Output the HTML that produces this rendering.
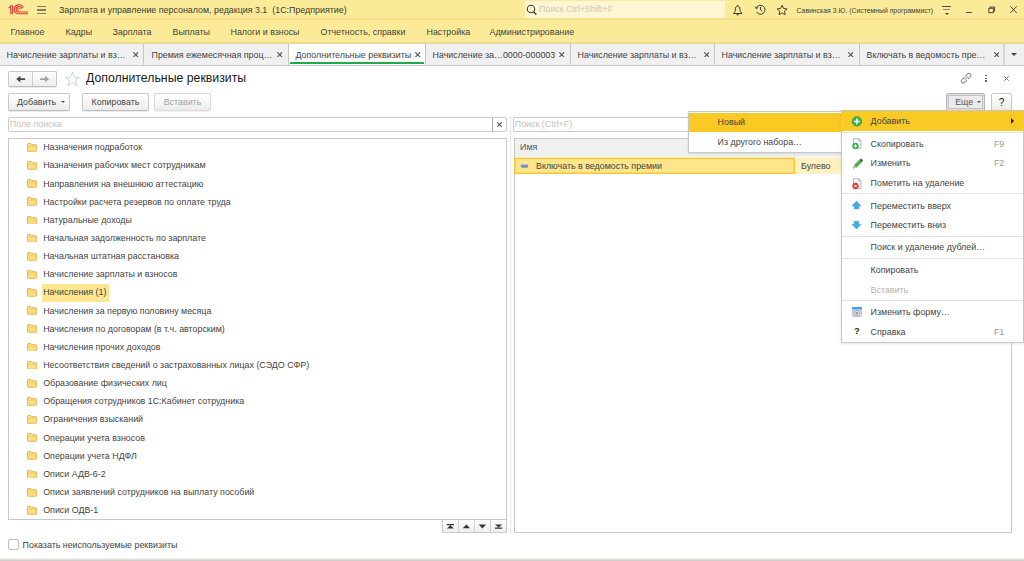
<!DOCTYPE html>
<html lang="ru">
<head>
<meta charset="utf-8">
<title>Дополнительные реквизиты</title>
<style>
*{box-sizing:border-box;margin:0;padding:0}
html,body{width:1024px;height:561px;overflow:hidden;background:#fff}
body{font-family:"Liberation Sans",sans-serif;font-size:8.89px;color:#444;position:relative}
.abs{position:absolute}
.t{position:absolute;white-space:nowrap;line-height:12px}
/* top bars */
#titlebar{left:0;top:0;width:1024px;height:44px;background:#fbeb99}
#sections{left:0;top:18px;width:1024px;height:3px;background:linear-gradient(#f6e390 33.3%,#f3de88 33.3%,#f3de88 66.6%,#f9e895 66.6%)}
#tabs{left:0;top:42px;width:1024px;height:24px;background:#f0f0f0;border-top:1px solid #f0dd88;border-bottom:1px solid #c9c9c9;box-shadow:inset 0 1px 0 #e4daa8}
.tabsep{position:absolute;top:44px;width:1px;height:21px;background:#c6c6c6}
.tabx{position:absolute;top:50px;width:7px;height:7px}
#activetab{left:289px;top:44px;width:136.6px;height:21.4px;background:#fff}
/* buttons */
.btn{position:absolute;height:18px;border:1px solid #c8c8c8;border-bottom-color:#bdbdbd;border-radius:2px;background:linear-gradient(#ffffff,#ececec);box-shadow:0 1px 0 rgba(0,0,0,.08);text-align:center;line-height:16px;white-space:nowrap;color:#444}
.btn.dis{color:#a2a2a2;border-color:#d9d9d9;box-shadow:0 1px 0 rgba(0,0,0,.05)}
.inp{position:absolute;height:15.4px;border:1px solid #cbcbcb;border-radius:2px;background:#fff;color:#c2c2c2;line-height:13.6px;padding-left:0.8px}
.panel{position:absolute;border:1px solid #c9c9c9;background:#fff}
.row{position:absolute;left:43.2px;white-space:nowrap;line-height:12px;color:#444}
.fold{position:absolute;left:26.7px;width:9.9px;height:8.8px}
/* menus */
.menu{position:absolute;background:#fff;border:1px solid #c8c8c8;box-shadow:0 1px 3px rgba(0,0,0,.10)}
.mi{position:absolute;left:28.6px;white-space:nowrap;line-height:12px;color:#444}
.mk{position:absolute;right:18.7px;white-space:nowrap;line-height:12px;color:#9a9a9a}
.msep{position:absolute;left:0;right:0;height:1px;background:#e3e3e3}
</style>
</head>
<body>
<!-- TITLE BAR -->
<div id="titlebar" class="abs"></div>
<div id="sections" class="abs"></div>
<div id="tabs" class="abs"></div>
<div id="activetab" class="abs"></div>
<div class="abs" style="left:290.2px;top:62.4px;width:133.6px;height:1.8px;background:#1faa4c"></div>

<div class="t" style="left:59px;top:4px;color:#3b3b2f">Зарплата и управление персоналом, редакция 3.1&nbsp; (1С:Предприятие)</div>


<!-- logo -->
<svg class="abs" style="left:8px;top:4.4px" width="21" height="12" viewBox="8 4 21 12" fill="none" stroke="#e0382d" stroke-width="1.1">
<path d="M8.6 8.1L10.8 5.9V14.3"/><path d="M12.6 5.2V14.3"/>
<path d="M23.2 8.2A4.45 4.45 0 1 0 18.9 13.75H28"/>
<path d="M21.5 8.8A2.7 2.7 0 1 0 18.9 11.95H28"/>
<path d="M19.9 9.3A1.1 1.1 0 1 0 18.9 10.3" stroke-width="0.9"/>
</svg>
<!-- hamburger -->
<div class="abs" style="left:37px;top:5.7px;width:9.2px;height:1.3px;background:#847e60"></div>
<div class="abs" style="left:37px;top:9.3px;width:9.2px;height:1.3px;background:#847e60"></div>
<div class="abs" style="left:37px;top:12.9px;width:9.2px;height:1.3px;background:#847e60"></div>
<!-- global search -->
<div class="abs" style="left:525px;top:1px;width:200px;height:17px;background:#fdf5d3"></div>
<svg class="abs" style="left:526px;top:4px" width="12" height="12" viewBox="0 0 12 12" fill="none" stroke="#3c3c34" stroke-width="1.1"><circle cx="5" cy="5" r="3.7"/><path d="M7.7 7.9l2.6 2.7" stroke-width="1.4"/></svg>
<div class="t" style="left:539px;top:3px;color:#ccc9b6;letter-spacing:-0.02px">Поиск Ctrl+Shift+F</div>
<!-- bell -->
<svg class="abs" style="left:732px;top:4px" width="12" height="12" viewBox="0 0 12 12" fill="none" stroke="#3c3c34" stroke-width="1" stroke-linejoin="round"><path d="M5.7 1V2.1"/><path d="M5.7 2.1C4 2.1 3.4 3.5 3.4 5.2C3.4 7.4 2.8 8.4 1.3 9.5H10.1C8.6 8.4 8 7.4 8 5.2C8 3.5 7.4 2.1 5.7 2.1Z"/><path d="M4.7 10.8h2" stroke-width="1.2"/></svg>
<!-- history -->
<svg class="abs" style="left:754px;top:4px" width="13" height="12" viewBox="754 4 13 12" fill="none" stroke="#3c3c34" stroke-width="1"><path d="M756.3 8.2A4.5 4.5 0 1 1 756.5 11.8"/><path d="M755.3 6.5l.9 2 2-.8" stroke-width="0.9"/><path d="M760.6 6.9V10l1.7 1.5"/></svg>
<!-- fav star -->
<svg class="abs" style="left:776.2px;top:3.8px" width="12.2" height="12.2" viewBox="0 0 13 13" fill="none" stroke="#3c3c34" stroke-width="1.05" stroke-linejoin="round"><path d="M6.5 1.3l1.6 3.5 3.7.4-2.8 2.5.8 3.7-3.3-1.9-3.3 1.9.8-3.7L1.2 5.2l3.7-.4z"/></svg>
<div class="t" style="left:796.6px;top:4.5px;font-size:6.84px;color:#3e3e34">Савинская З.Ю. (Системный программист)</div>
<!-- settings -->
<div class="abs" style="left:942px;top:5.7px;width:9.4px;height:1.1px;background:#4a4a40"></div>
<div class="abs" style="left:943.3px;top:8.6px;width:7px;height:1.1px;background:#8e8a6a"></div>
<div class="abs" style="left:944.7px;top:12.9px;width:0;height:0;border-top:2.3px solid #3a3a32;border-left:2px solid transparent;border-right:2px solid transparent"></div>
<!-- window controls -->
<div class="abs" style="left:966.3px;top:11.7px;width:5.9px;height:1px;background:#55553f"></div>
<svg class="abs" style="left:987px;top:5px" width="9" height="9" viewBox="0 0 9 9" fill="none" stroke="#4a4a3c" stroke-width="1"><rect x="1.9" y="3.3" width="4.4" height="4.4"/><path d="M3.1 3.3V2H7.6V6.3H6.3"/></svg>
<svg class="abs" style="left:1009.3px;top:4.9px" width="10" height="10" viewBox="0 0 10 10" fill="none" stroke="#4a4a3c" stroke-width="1"><path d="M1.3 1.3l6.5 6.7M7.8 1.3L1.3 8"/></svg>

<!-- sections -->
<div class="t" style="left:10.5px;top:26px">Главное</div>
<div class="t" style="left:65.5px;top:26px">Кадры</div>
<div class="t" style="left:112.5px;top:26px">Зарплата</div>
<div class="t" style="left:172.5px;top:26px">Выплаты</div>
<div class="t" style="left:230.5px;top:26px">Налоги и взносы</div>
<div class="t" style="left:320.5px;top:26px">Отчетность, справки</div>
<div class="t" style="left:426.5px;top:26px">Настройка</div>
<div class="t" style="left:489.5px;top:26px">Администрирование</div>

<!-- tabs -->
<div class="t" style="left:6.5px;top:49px">Начисление зарплаты и вз…</div>
<div class="tabsep" style="left:143px"></div>
<div class="t" style="left:151.5px;top:49px">Премия ежемесячная проц…</div>
<div class="tabsep" style="left:288px"></div>
<div class="t" style="left:295.5px;top:49px">Дополнительные реквизиты</div>
<div class="tabsep" style="left:425px"></div>
<div class="t" style="left:432.5px;top:49px">Начисление за…0000-000003</div>
<div class="tabsep" style="left:570px"></div>
<div class="t" style="left:577.5px;top:49px">Начисление зарплаты и вз…</div>
<div class="tabsep" style="left:714px"></div>
<div class="t" style="left:721.5px;top:49px">Начисление зарплаты и вз…</div>
<div class="tabsep" style="left:859px"></div>
<div class="t" style="left:866.5px;top:49px">Включать в ведомость пре…</div>
<div class="tabsep" style="left:1003px;width:2px;background:#d6d6d6"></div>

<svg class="abs" style="left:133.4px;top:51.9px" width="5.4" height="5.4" viewBox="0 0 5.4 5.4" stroke="#4c4c4c" stroke-width="1.05"><path d="M.3 .3L5.1 5.1M5.1 .3L.3 5.1"/></svg>
<svg class="abs" style="left:277.3px;top:51.9px" width="5.4" height="5.4" viewBox="0 0 5.4 5.4" stroke="#4c4c4c" stroke-width="1.05"><path d="M.3 .3L5.1 5.1M5.1 .3L.3 5.1"/></svg>
<svg class="abs" style="left:415.4px;top:51.9px" width="5.4" height="5.4" viewBox="0 0 5.4 5.4" stroke="#4c4c4c" stroke-width="1.05"><path d="M.3 .3L5.1 5.1M5.1 .3L.3 5.1"/></svg>
<svg class="abs" style="left:559.4px;top:51.9px" width="5.4" height="5.4" viewBox="0 0 5.4 5.4" stroke="#4c4c4c" stroke-width="1.05"><path d="M.3 .3L5.1 5.1M5.1 .3L.3 5.1"/></svg>
<svg class="abs" style="left:704.0px;top:51.9px" width="5.4" height="5.4" viewBox="0 0 5.4 5.4" stroke="#4c4c4c" stroke-width="1.05"><path d="M.3 .3L5.1 5.1M5.1 .3L.3 5.1"/></svg>
<svg class="abs" style="left:848.3px;top:51.9px" width="5.4" height="5.4" viewBox="0 0 5.4 5.4" stroke="#4c4c4c" stroke-width="1.05"><path d="M.3 .3L5.1 5.1M5.1 .3L.3 5.1"/></svg>
<svg class="abs" style="left:993.7px;top:51.9px" width="5.4" height="5.4" viewBox="0 0 5.4 5.4" stroke="#4c4c4c" stroke-width="1.05"><path d="M.3 .3L5.1 5.1M5.1 .3L.3 5.1"/></svg>
<div class="abs" style="left:1011.3px;top:53px;width:0;height:0;border-top:3.4px solid #444;border-left:3px solid transparent;border-right:3px solid transparent"></div>
<!-- FORM HEADER -->
<div class="btn" style="left:8px;top:71px;width:49px;height:16px"></div>
<div class="abs" style="left:32px;top:72px;width:1px;height:14px;background:#d0d0d0"></div>

<svg class="abs" style="left:8px;top:71px" width="49" height="16" viewBox="8 71 49 16">
<path d="M16.2 79.1l4.2-3.4v2.5h4.7v1.8h-4.7v2.5z" fill="#484848"/>
<path d="M49.2 79.1l-4.2-3.4v2.5h-4.9v1.8h4.9v2.5z" fill="#a4a4a4"/>
</svg>
<svg class="abs" style="left:64px;top:71px" width="17" height="16" viewBox="64 71 17 16" fill="#fff" stroke="#bfc7d1" stroke-width="0.8" stroke-linejoin="miter"><path d="M72.4 72.3l1.9 4.8 5.1.3-4 3.2 1.3 5-4.3-2.8-4.3 2.8 1.3-5-4-3.2 5.1-.3z"/></svg>
<!-- link, dots, close -->
<svg class="abs" style="left:960px;top:72px" width="13" height="13" viewBox="960 72 13 13" fill="none" stroke="#8c8c8c" stroke-width="1"><g transform="rotate(-45 966.1 78.2)"><path d="M965.3 76.3h-3.3a1.9 1.9 0 0 0 0 3.8h3.3"/><path d="M966.9 76.3h3.3a1.9 1.9 0 0 1 0 3.8h-3.3"/><path d="M964 78.2h4.2"/></g></svg>
<div class="abs" style="left:985.2px;top:74.7px;width:1.4px;height:1.4px;background:#666"></div>
<div class="abs" style="left:985.2px;top:77.5px;width:1.4px;height:1.4px;background:#666"></div>
<div class="abs" style="left:985.2px;top:80.3px;width:1.4px;height:1.4px;background:#666"></div>
<svg class="abs" style="left:1003.8px;top:76.1px" width="5" height="5" viewBox="0 0 5 5" stroke="#777" stroke-width="1"><path d="M.3 .3L4.7 4.7M4.7 .3L.3 4.7"/></svg>
<div class="t" style="left:86px;top:70px;font-size:12.3px;line-height:16px;color:#1a1a1a">Дополнительные реквизиты</div>

<div class="btn" style="left:8px;top:93px;width:62px;text-align:left;padding-left:8px">Добавить</div>
<div class="abs" style="left:60.5px;top:100.9px;width:0;height:0;border-top:2.4px solid #555;border-left:2.1px solid transparent;border-right:2.1px solid transparent"></div>
<div class="btn" style="left:82px;top:93px;width:67px">Копировать</div>
<div class="btn dis" style="left:154px;top:93px;width:57px">Вставить</div>
<div class="btn" style="left:945.5px;top:93px;width:39.8px;background:#ebebeb;border-color:#b4b4b4;color:#555;box-shadow:inset 0 0 0 1px #e2e2e2,inset 0 0 0 2px #c2c2c2;text-align:left;padding-left:8.7px">Еще</div>
<div class="abs" style="left:977.4px;top:100.9px;width:0;height:0;border-top:2.4px solid #555;border-left:2px solid transparent;border-right:2px solid transparent"></div>
<div class="btn" style="left:991.3px;top:93px;width:20.6px;color:#222;font-size:10px;line-height:17px">?</div>

<div class="inp" style="left:8px;top:116.8px;width:499px">Поле поиска</div>
<div class="abs" style="left:492px;top:117.5px;width:1px;height:14px;background:#adadad"></div>
<svg class="abs" style="left:496.9px;top:122px" width="5" height="5" viewBox="0 0 5 5" stroke="#555" stroke-width="1.05"><path d="M.3 .3L4.7 4.7M4.7 .3L.3 4.7"/></svg>
<div class="inp" style="left:513px;top:116.8px;width:499px">Поиск (Ctrl+F)</div>

<!-- LEFT TREE -->
<div class="panel" id="tree" style="left:8px;top:138px;width:499px;height:382px"></div>
<svg class="fold" style="top:142.90px" viewBox="0 0 10.4 8.8" preserveAspectRatio="none"><path d="M.5 1.1Q.5 .5 1.1 .5H4L5 1.7H9.3Q9.9 1.7 9.9 2.3V7.7Q9.9 8.3 9.3 8.3H1.1Q.5 8.3 .5 7.7Z" fill="#fbdd84" stroke="#e4ae42" stroke-width=".9"/><path d="M1 3.3H9.4" stroke="#f0c55e" stroke-width=".7"/></svg>
<div class="row" style="top:141.20px">Назначения подработок</div>
<svg class="fold" style="top:161.05px" viewBox="0 0 10.4 8.8" preserveAspectRatio="none"><path d="M.5 1.1Q.5 .5 1.1 .5H4L5 1.7H9.3Q9.9 1.7 9.9 2.3V7.7Q9.9 8.3 9.3 8.3H1.1Q.5 8.3 .5 7.7Z" fill="#fbdd84" stroke="#e4ae42" stroke-width=".9"/><path d="M1 3.3H9.4" stroke="#f0c55e" stroke-width=".7"/></svg>
<div class="row" style="top:159.35px">Назначения рабочих мест сотрудникам</div>
<svg class="fold" style="top:179.20px" viewBox="0 0 10.4 8.8" preserveAspectRatio="none"><path d="M.5 1.1Q.5 .5 1.1 .5H4L5 1.7H9.3Q9.9 1.7 9.9 2.3V7.7Q9.9 8.3 9.3 8.3H1.1Q.5 8.3 .5 7.7Z" fill="#fbdd84" stroke="#e4ae42" stroke-width=".9"/><path d="M1 3.3H9.4" stroke="#f0c55e" stroke-width=".7"/></svg>
<div class="row" style="top:177.50px">Направления на внешнюю аттестацию</div>
<svg class="fold" style="top:197.35px" viewBox="0 0 10.4 8.8" preserveAspectRatio="none"><path d="M.5 1.1Q.5 .5 1.1 .5H4L5 1.7H9.3Q9.9 1.7 9.9 2.3V7.7Q9.9 8.3 9.3 8.3H1.1Q.5 8.3 .5 7.7Z" fill="#fbdd84" stroke="#e4ae42" stroke-width=".9"/><path d="M1 3.3H9.4" stroke="#f0c55e" stroke-width=".7"/></svg>
<div class="row" style="top:195.65px">Настройки расчета резервов по оплате труда</div>
<svg class="fold" style="top:215.50px" viewBox="0 0 10.4 8.8" preserveAspectRatio="none"><path d="M.5 1.1Q.5 .5 1.1 .5H4L5 1.7H9.3Q9.9 1.7 9.9 2.3V7.7Q9.9 8.3 9.3 8.3H1.1Q.5 8.3 .5 7.7Z" fill="#fbdd84" stroke="#e4ae42" stroke-width=".9"/><path d="M1 3.3H9.4" stroke="#f0c55e" stroke-width=".7"/></svg>
<div class="row" style="top:213.80px">Натуральные доходы</div>
<svg class="fold" style="top:233.65px" viewBox="0 0 10.4 8.8" preserveAspectRatio="none"><path d="M.5 1.1Q.5 .5 1.1 .5H4L5 1.7H9.3Q9.9 1.7 9.9 2.3V7.7Q9.9 8.3 9.3 8.3H1.1Q.5 8.3 .5 7.7Z" fill="#fbdd84" stroke="#e4ae42" stroke-width=".9"/><path d="M1 3.3H9.4" stroke="#f0c55e" stroke-width=".7"/></svg>
<div class="row" style="top:231.95px">Начальная задолженность по зарплате</div>
<svg class="fold" style="top:251.80px" viewBox="0 0 10.4 8.8" preserveAspectRatio="none"><path d="M.5 1.1Q.5 .5 1.1 .5H4L5 1.7H9.3Q9.9 1.7 9.9 2.3V7.7Q9.9 8.3 9.3 8.3H1.1Q.5 8.3 .5 7.7Z" fill="#fbdd84" stroke="#e4ae42" stroke-width=".9"/><path d="M1 3.3H9.4" stroke="#f0c55e" stroke-width=".7"/></svg>
<div class="row" style="top:250.10px">Начальная штатная расстановка</div>
<svg class="fold" style="top:269.95px" viewBox="0 0 10.4 8.8" preserveAspectRatio="none"><path d="M.5 1.1Q.5 .5 1.1 .5H4L5 1.7H9.3Q9.9 1.7 9.9 2.3V7.7Q9.9 8.3 9.3 8.3H1.1Q.5 8.3 .5 7.7Z" fill="#fbdd84" stroke="#e4ae42" stroke-width=".9"/><path d="M1 3.3H9.4" stroke="#f0c55e" stroke-width=".7"/></svg>
<div class="row" style="top:268.25px">Начисление зарплаты и взносов</div>
<div class="abs" style="left:42px;top:283.80px;width:66.5px;height:17.9px;background:#fde68f"></div>
<svg class="fold" style="top:288.10px" viewBox="0 0 10.4 8.8" preserveAspectRatio="none"><path d="M.5 1.1Q.5 .5 1.1 .5H4L5 1.7H9.3Q9.9 1.7 9.9 2.3V7.7Q9.9 8.3 9.3 8.3H1.1Q.5 8.3 .5 7.7Z" fill="#fbdd84" stroke="#e4ae42" stroke-width=".9"/><path d="M1 3.3H9.4" stroke="#f0c55e" stroke-width=".7"/></svg>
<div class="row" style="top:286.40px">Начисления (1)</div>
<svg class="fold" style="top:306.25px" viewBox="0 0 10.4 8.8" preserveAspectRatio="none"><path d="M.5 1.1Q.5 .5 1.1 .5H4L5 1.7H9.3Q9.9 1.7 9.9 2.3V7.7Q9.9 8.3 9.3 8.3H1.1Q.5 8.3 .5 7.7Z" fill="#fbdd84" stroke="#e4ae42" stroke-width=".9"/><path d="M1 3.3H9.4" stroke="#f0c55e" stroke-width=".7"/></svg>
<div class="row" style="top:304.55px">Начисления за первую половину месяца</div>
<svg class="fold" style="top:324.40px" viewBox="0 0 10.4 8.8" preserveAspectRatio="none"><path d="M.5 1.1Q.5 .5 1.1 .5H4L5 1.7H9.3Q9.9 1.7 9.9 2.3V7.7Q9.9 8.3 9.3 8.3H1.1Q.5 8.3 .5 7.7Z" fill="#fbdd84" stroke="#e4ae42" stroke-width=".9"/><path d="M1 3.3H9.4" stroke="#f0c55e" stroke-width=".7"/></svg>
<div class="row" style="top:322.70px">Начисления по договорам (в т.ч. авторским)</div>
<svg class="fold" style="top:342.55px" viewBox="0 0 10.4 8.8" preserveAspectRatio="none"><path d="M.5 1.1Q.5 .5 1.1 .5H4L5 1.7H9.3Q9.9 1.7 9.9 2.3V7.7Q9.9 8.3 9.3 8.3H1.1Q.5 8.3 .5 7.7Z" fill="#fbdd84" stroke="#e4ae42" stroke-width=".9"/><path d="M1 3.3H9.4" stroke="#f0c55e" stroke-width=".7"/></svg>
<div class="row" style="top:340.85px">Начисления прочих доходов</div>
<svg class="fold" style="top:360.70px" viewBox="0 0 10.4 8.8" preserveAspectRatio="none"><path d="M.5 1.1Q.5 .5 1.1 .5H4L5 1.7H9.3Q9.9 1.7 9.9 2.3V7.7Q9.9 8.3 9.3 8.3H1.1Q.5 8.3 .5 7.7Z" fill="#fbdd84" stroke="#e4ae42" stroke-width=".9"/><path d="M1 3.3H9.4" stroke="#f0c55e" stroke-width=".7"/></svg>
<div class="row" style="top:359.00px">Несоответствия сведений о застрахованных лицах (СЭДО СФР)</div>
<svg class="fold" style="top:378.85px" viewBox="0 0 10.4 8.8" preserveAspectRatio="none"><path d="M.5 1.1Q.5 .5 1.1 .5H4L5 1.7H9.3Q9.9 1.7 9.9 2.3V7.7Q9.9 8.3 9.3 8.3H1.1Q.5 8.3 .5 7.7Z" fill="#fbdd84" stroke="#e4ae42" stroke-width=".9"/><path d="M1 3.3H9.4" stroke="#f0c55e" stroke-width=".7"/></svg>
<div class="row" style="top:377.15px">Образование физических лиц</div>
<svg class="fold" style="top:397.00px" viewBox="0 0 10.4 8.8" preserveAspectRatio="none"><path d="M.5 1.1Q.5 .5 1.1 .5H4L5 1.7H9.3Q9.9 1.7 9.9 2.3V7.7Q9.9 8.3 9.3 8.3H1.1Q.5 8.3 .5 7.7Z" fill="#fbdd84" stroke="#e4ae42" stroke-width=".9"/><path d="M1 3.3H9.4" stroke="#f0c55e" stroke-width=".7"/></svg>
<div class="row" style="top:395.30px">Обращения сотрудников 1С:Кабинет сотрудника</div>
<svg class="fold" style="top:415.15px" viewBox="0 0 10.4 8.8" preserveAspectRatio="none"><path d="M.5 1.1Q.5 .5 1.1 .5H4L5 1.7H9.3Q9.9 1.7 9.9 2.3V7.7Q9.9 8.3 9.3 8.3H1.1Q.5 8.3 .5 7.7Z" fill="#fbdd84" stroke="#e4ae42" stroke-width=".9"/><path d="M1 3.3H9.4" stroke="#f0c55e" stroke-width=".7"/></svg>
<div class="row" style="top:413.45px">Ограничения взысканий</div>
<svg class="fold" style="top:433.30px" viewBox="0 0 10.4 8.8" preserveAspectRatio="none"><path d="M.5 1.1Q.5 .5 1.1 .5H4L5 1.7H9.3Q9.9 1.7 9.9 2.3V7.7Q9.9 8.3 9.3 8.3H1.1Q.5 8.3 .5 7.7Z" fill="#fbdd84" stroke="#e4ae42" stroke-width=".9"/><path d="M1 3.3H9.4" stroke="#f0c55e" stroke-width=".7"/></svg>
<div class="row" style="top:431.60px">Операции учета взносов</div>
<svg class="fold" style="top:451.45px" viewBox="0 0 10.4 8.8" preserveAspectRatio="none"><path d="M.5 1.1Q.5 .5 1.1 .5H4L5 1.7H9.3Q9.9 1.7 9.9 2.3V7.7Q9.9 8.3 9.3 8.3H1.1Q.5 8.3 .5 7.7Z" fill="#fbdd84" stroke="#e4ae42" stroke-width=".9"/><path d="M1 3.3H9.4" stroke="#f0c55e" stroke-width=".7"/></svg>
<div class="row" style="top:449.75px">Операции учета НДФЛ</div>
<svg class="fold" style="top:469.60px" viewBox="0 0 10.4 8.8" preserveAspectRatio="none"><path d="M.5 1.1Q.5 .5 1.1 .5H4L5 1.7H9.3Q9.9 1.7 9.9 2.3V7.7Q9.9 8.3 9.3 8.3H1.1Q.5 8.3 .5 7.7Z" fill="#fbdd84" stroke="#e4ae42" stroke-width=".9"/><path d="M1 3.3H9.4" stroke="#f0c55e" stroke-width=".7"/></svg>
<div class="row" style="top:467.90px">Описи АДВ-6-2</div>
<svg class="fold" style="top:487.75px" viewBox="0 0 10.4 8.8" preserveAspectRatio="none"><path d="M.5 1.1Q.5 .5 1.1 .5H4L5 1.7H9.3Q9.9 1.7 9.9 2.3V7.7Q9.9 8.3 9.3 8.3H1.1Q.5 8.3 .5 7.7Z" fill="#fbdd84" stroke="#e4ae42" stroke-width=".9"/><path d="M1 3.3H9.4" stroke="#f0c55e" stroke-width=".7"/></svg>
<div class="row" style="top:486.05px">Описи заявлений сотрудников на выплату пособий</div>
<svg class="fold" style="top:505.90px" viewBox="0 0 10.4 8.8" preserveAspectRatio="none"><path d="M.5 1.1Q.5 .5 1.1 .5H4L5 1.7H9.3Q9.9 1.7 9.9 2.3V7.7Q9.9 8.3 9.3 8.3H1.1Q.5 8.3 .5 7.7Z" fill="#fbdd84" stroke="#e4ae42" stroke-width=".9"/><path d="M1 3.3H9.4" stroke="#f0c55e" stroke-width=".7"/></svg>
<div class="row" style="top:504.20px">Описи ОДВ-1</div>
<!-- tree bottom buttons -->
<div class="abs" style="left:442px;top:519px;width:65px;height:14.4px;border:1px solid #c9c9c9;background:linear-gradient(#fff,#eee)"></div>
<div class="abs" style="left:458px;top:520px;width:1px;height:12.4px;background:#d2d2d2"></div>
<div class="abs" style="left:474px;top:520px;width:1px;height:12.4px;background:#d2d2d2"></div>
<div class="abs" style="left:490px;top:520px;width:1px;height:12.4px;background:#d2d2d2"></div>
<svg class="abs" style="left:442px;top:519px" width="65" height="15" viewBox="442 519 65 15"><g fill="#333">
<path d="M446.8 524.1h7.2v1.1h-7.2zM450.4 525.2l3.5 3.2h-7z"/>
<path d="M466.4 524.4l3.7 3.9h-7.4z"/>
<path d="M482.4 528.5l3.7-3.9h-7.4z"/>
<path d="M495 527.6h7.2v1.1h-7.2zM498.6 527.6l3.5-3.2h-7z"/>
</g></svg>
<!-- splitter -->
<div class="abs" style="left:510px;top:117px;width:0;height:416px;border-left:1px dotted #dcdcdc"></div>
<!-- RIGHT TABLE -->
<div class="panel" id="table" style="left:513.5px;top:138px;width:498.5px;height:395px"></div>
<div class="abs" style="left:515px;top:139px;width:496px;height:18px;background:#f1f1f1"></div>
<div class="abs" style="left:794px;top:139px;width:1px;height:18px;background:#e4e4e4"></div>
<div class="t" style="left:520px;top:141px;color:#555">Имя</div>
<svg class="abs" style="left:513px;top:156px" width="500" height="20" viewBox="513 156 500 20">
<rect x="514.5" y="157.7" width="496.5" height="16.2" fill="#fff1c2"/>
<rect x="514.8" y="158.4" width="279.4" height="14.9" fill="#fde58c" stroke="#f7c530" stroke-width="1.4"/>
<rect x="520.8" y="164.5" width="7.4" height="2.8" rx=".8" fill="#6ba1d8"/>
<rect x="521.2" y="166.6" width="6.6" height=".8" fill="#4479b0"/>
</svg>
<div class="t" style="left:536px;top:159.6px">Включать в ведомость премии</div>
<div class="t" style="left:801px;top:159.6px">Булево</div>

<!-- MENUS -->
<div class="menu" id="submenu" style="left:688px;top:111px;width:154px;height:41.6px">
<div class="abs" style="left:0;top:0.6px;width:152px;height:19px;background:#f9ca24"></div>
<div class="mi" style="top:4.1px">Новый</div>
<div class="mi" style="top:23.5px">Из другого набора…</div>
</div>
<div class="menu" id="mainmenu" style="left:841px;top:110px;width:183px;height:232.5px">
<div class="abs" style="left:0;top:0.4px;width:181px;height:19.6px;background:#f9ca24"></div>
<div class="mi" style="top:4.1px">Добавить</div>
<div class="abs" style="left:168.5px;top:7.4px;width:0;height:0;border-left:3.6px solid #222;border-top:3px solid transparent;border-bottom:3px solid transparent"></div>
<div class="msep" style="top:20.6px"></div>
<div class="mi" style="top:26.9px">Скопировать</div><div class="mk" style="top:26.9px">F9</div>
<div class="mi" style="top:46.1px">Изменить</div><div class="mk" style="top:46.1px">F2</div>
<div class="mi" style="top:66.3px">Пометить на удаление</div>
<div class="msep" style="top:82.3px"></div>
<div class="mi" style="top:88.7px">Переместить вверх</div>
<div class="mi" style="top:108.1px">Переместить вниз</div>
<div class="msep" style="top:124.8px"></div>
<div class="mi" style="top:130.2px">Поиск и удаление дублей…</div>
<div class="msep" style="top:147.4px"></div>
<div class="mi" style="top:153.0px">Копировать</div>
<div class="mi" style="top:172.8px;color:#b4b4b4">Вставить</div>
<div class="msep" style="top:189.3px"></div>
<div class="mi" style="top:195.2px">Изменить форму…</div>
<div class="mi" style="top:215.1px">Справка</div><div class="mk" style="top:215.1px">F1</div>
<svg class="abs" style="left:0;top:0" width="30" height="231" viewBox="0 0 30 231">
<!-- add -->
<circle cx="14.9" cy="10.4" r="4.7" fill="#3db54a" stroke="#2a9a3a" stroke-width="0.8"/>
<path d="M14.9 7.6v5.6M12.1 10.4h5.6" stroke="#fff" stroke-width="1.5"/>
<!-- copy -->
<path d="M11.6 27.7h5.1l2.2 2.2v7.4h-7.3z" fill="#fff" stroke="#9aa1a9" stroke-width="0.8"/>
<path d="M16.7 27.7v2.2h2.2" fill="none" stroke="#9aa1a9" stroke-width="0.7"/>
<circle cx="13.5" cy="35" r="2.9" fill="#3db54a" stroke="#2a9a3a" stroke-width="0.6"/>
<path d="M13.5 33.3v3.4M11.8 35h3.4" stroke="#fff" stroke-width="1"/>
<!-- pencil -->
<path d="M12.1 54.4l5.6-5.6 2.1 2.1-5.6 5.6z" fill="#4cae4f" stroke="#3b8f3f" stroke-width="0.5"/>
<path d="M17.7 48.8l1-1q.5-.4 1 .1l1.1 1.1q.4.5 0 1l-1 1z" fill="#4a5560"/>
<path d="M12.1 54.4l-.9 3 3-.9z" fill="#e9b46a"/>
<path d="M11.2 57.4l.3-1.1.8.8z" fill="#333"/>
<!-- delete mark -->
<path d="M11.6 67.7h5.1l2.2 2.2v7.4h-7.3z" fill="#fff" stroke="#9aa1a9" stroke-width="0.8"/>
<path d="M16.7 67.7v2.2h2.2" fill="none" stroke="#9aa1a9" stroke-width="0.7"/>
<circle cx="13.5" cy="75" r="2.9" fill="#e23b3b" stroke="#c42626" stroke-width="0.6"/>
<path d="M12.3 73.8l2.4 2.4M14.7 73.8l-2.4 2.4" stroke="#fff" stroke-width="1"/>
<!-- up -->
<path d="M14.5 90.3l4.4 4.5h-2.2v3h-4.4v-3h-2.2z" fill="#41abec" stroke="#2f92d6" stroke-width="0.6" stroke-linejoin="round"/>
<!-- down -->
<path d="M14.5 117.9l4.4-4.5h-2.2v-3h-4.4v3h-2.2z" fill="#41abec" stroke="#2f92d6" stroke-width="0.6" stroke-linejoin="round"/>
<!-- form -->
<rect x="10.4" y="196.4" width="9.2" height="9.2" rx="0.8" fill="#f2f4f7" stroke="#a9b3bf" stroke-width="0.8"/>
<rect x="10" y="196" width="10" height="2.4" rx="0.8" fill="#4a9af0"/>
<rect x="11.6" y="199.2" width="6.8" height="5.4" fill="none" stroke="#b4bcc6" stroke-width="0.6"/>
<circle cx="15" cy="201.9" r="2.5" fill="#e8ebef" stroke="#8e99a6" stroke-width="0.9"/>
<circle cx="15" cy="201.9" r="1" fill="#6f7b88"/>
</svg>
<div class="abs" style="left:11.5px;top:214.3px;width:7px;text-align:center;font-weight:bold;font-size:8.8px;line-height:12px;color:#222">?</div>
</div>

<!-- footer -->
<div class="abs" style="left:8.3px;top:539.4px;width:10.3px;height:10.3px;border:1px solid #bdbdbd;border-radius:2px;background:#fff"></div>
<div class="t" style="left:22.6px;top:539px">Показать неиспользуемые реквизиты</div>
<div class="abs" style="left:0;top:557px;width:1024px;height:4px;background:linear-gradient(#fff 10%,#e6e4df 55%,#c9c5bd)"></div>
</body>
</html>
